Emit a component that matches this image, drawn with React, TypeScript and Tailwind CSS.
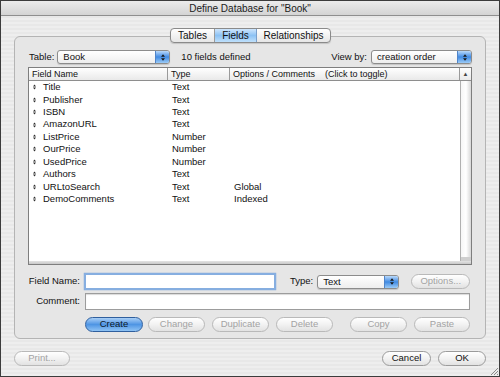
import React from "react";

const font = "font-['Liberation_Sans',Arial,sans-serif]";

const fields = [
  { name: "Title", type: "Text", opt: "" },
  { name: "Publisher", type: "Text", opt: "" },
  { name: "ISBN", type: "Text", opt: "" },
  { name: "AmazonURL", type: "Text", opt: "" },
  { name: "ListPrice", type: "Number", opt: "" },
  { name: "OurPrice", type: "Number", opt: "" },
  { name: "UsedPrice", type: "Number", opt: "" },
  { name: "Authors", type: "Text", opt: "" },
  { name: "URLtoSearch", type: "Text", opt: "Global" },
  { name: "DemoComments", type: "Text", opt: "Indexed" },
];

// tiny up/down arrows used in popups and the row handles
const UpDown = ({ color = "#1a1a1a", w = 5, h = 8 }: { color?: string; w?: number; h?: number }) => (
  <svg width={w} height={h} viewBox="0 0 5 8">
    <path d="M2.5 0 L5 3 L0 3 Z" fill={color} />
    <path d="M0 5 L5 5 L2.5 8 Z" fill={color} />
  </svg>
);

const Popup = ({ label, w }: { label: string; w: string }) => (
  <div
    className={`flex h-[14px] ${w} items-stretch overflow-hidden rounded-[3px] border border-[#8c8c8c] bg-gradient-to-b from-white to-[#eeeeee] shadow-[0_1px_1px_rgba(0,0,0,0.15)]`}
  >
    <span className="flex-1 pl-[5px] text-[9.5px] leading-[12px] text-[#111]">{label}</span>
    <span className="flex w-[14px] items-center justify-center border-l border-[#4f84c9] bg-gradient-to-b from-[#b9d9fa] via-[#3f8ae2] to-[#9ccbf6]">
      <UpDown w={4} h={7} />
    </span>
  </div>
);

const Btn = ({
  label,
  w,
  disabled,
  primary,
}: {
  label: string;
  w: string;
  disabled?: boolean;
  primary?: boolean;
}) => (
  <div
    className={`flex h-[15px] ${w} items-center justify-center rounded-full border text-[9.5px] ${
      primary
        ? "border-[#2f5f9e] bg-gradient-to-b from-[#a9cff6] via-[#4e95e4] to-[#8fc3f4] text-[#0d1a2a]"
        : "border-[#9b9b9b] bg-gradient-to-b from-white via-[#f2f2f2] to-[#e2e2e2]"
    } ${disabled ? "text-[#a3a3a3] border-[#b9b9b9]" : primary ? "" : "text-[#111]"}`}
  >
    {label}
  </div>
);

export default function App() {
  return (
    <div
      className={`${font} flex h-[377px] w-[500px] flex-col overflow-hidden border border-[#3c3c3c] bg-[repeating-linear-gradient(0deg,#eeeeee_0px,#eeeeee_2px,#e8e8e8_2px,#e8e8e8_4px)] text-[#111]`}
    >
      {/* title bar */}
      <div className="flex h-[15px] shrink-0 items-center justify-center border-b border-[#8f8f8f] bg-gradient-to-b from-[#ececec] to-[#d4d4d4] text-[10px] text-[#1b1b1b]">
        Define Database for "Book"
      </div>

      {/* tabs */}
      <div className="relative z-10 mt-[12px] flex justify-center">
        <div className="ml-[1px] flex h-[15px] overflow-hidden rounded-[4px] border border-[#8a8a8a] bg-gradient-to-b from-white to-[#e6e6e6] text-[10px] shadow-[0_1px_1px_rgba(0,0,0,0.15)]">
          <div className="flex w-[44px] items-center justify-center border-r border-[#9a9a9a]">Tables</div>
          <div className="flex w-[42px] items-center justify-center border-r border-[#7a9fcb] bg-gradient-to-b from-[#cfe6fc] via-[#8cc2f4] to-[#bfe0fb]">
            Fields
          </div>
          <div className="flex w-[73px] items-center justify-center">Relationships</div>
        </div>
      </div>

      {/* group box */}
      <div className="mx-[13px] -mt-[7px] flex h-[303px] flex-col rounded-[6px] border border-[#b4b4b4] bg-[#e6e6e6] px-[13px] pt-[13px]">
        <div className="flex h-[14px] items-center text-[9.5px]">
          <span className="ml-[1px] mr-[3px]">Table:</span>
          <Popup label="Book" w="w-[113px]" />
          <span className="ml-[11px]">10 fields defined</span>
          <span className="ml-auto mr-[4px]">View by:</span>
          <Popup label="creation order" w="w-[101px]" />
        </div>

        {/* field list */}
        <div className="mt-[3px] flex h-[198px] flex-col border border-[#7e7e7e] bg-white">
          <div className="flex h-[13px] shrink-0 border-b border-[#8e8e8e] bg-gradient-to-b from-white to-[#e9e9e9] text-[9px]">
            <div className="w-[139px] border-r border-[#9a9a9a] pl-[3px] leading-[12px]">Field Name</div>
            <div className="w-[62px] border-r border-[#9a9a9a] pl-[3px] leading-[12px]">Type</div>
            <div className="flex-1 border-r border-[#9a9a9a] pl-[3px] leading-[12px] whitespace-pre">
              {"Options / Comments    (Click to toggle)"}
            </div>
            <div className="flex w-[11px] items-center justify-center text-[6px] text-[#444]">▲</div>
          </div>
          <div className="flex flex-1">
            <div className="flex-1">
              {fields.map((f) => (
                <div key={f.name} className="flex h-[12.45px] items-center text-[9.5px]">
                  <div className="flex w-[139px] items-center">
                    <span className="ml-[4px] mr-[7px] flex">
                      <UpDown w={3} h={6} color="#2a2a2a" />
                    </span>
                    {f.name}
                  </div>
                  <div className="w-[62px] pl-[4px]">{f.type}</div>
                  <div className="pl-[4px]">{f.opt}</div>
                </div>
              ))}
            </div>
            <div className="flex w-[11px] flex-col border-l border-[#b0b0b0] bg-gradient-to-r from-[#f6f6f6] via-white to-[#d8d8d8]">
              <div className="flex-1" />
              <div className="h-[4px] bg-[#cfcfcf]" />
            </div>
          </div>
          <div className="h-[3px] bg-gradient-to-b from-[#e4e4e4] to-[#c8c8c8]" />
        </div>

        {/* field name row */}
        <div className="mt-[8px] flex h-[17px] items-center text-[9.5px]">
          <span className="w-[52px] text-right">Field Name:</span>
          <div className="ml-[4px] h-[17px] w-[192px] border-2 border-[#86aee0] bg-white shadow-[0_0_1px_#5b8fd6]" />
          <span className="ml-[14px]">Type:</span>
          <span className="ml-[4px]">
            <Popup label="Text" w="w-[82px]" />
          </span>
          <span className="ml-[12px]">
            <Btn label="Options..." w="w-[59px]" disabled />
          </span>
        </div>

        {/* comment row */}
        <div className="mt-[3px] flex h-[17px] items-center text-[9.5px]">
          <span className="w-[52px] text-right">Comment:</span>
          <div className="ml-[5px] h-[17px] flex-1 border border-[#9c9c9c] bg-white shadow-[inset_0_1px_1px_rgba(0,0,0,0.15)]" />
          <div className="w-[2px]" />
        </div>

        {/* action buttons */}
        <div className="mt-[7px] flex h-[15px] items-center pl-[57px]">
          <Btn label="Create" w="w-[58px]" primary />
          <span className="ml-[5px]">
            <Btn label="Change" w="w-[57px]" disabled />
          </span>
          <span className="ml-[7px]">
            <Btn label="Duplicate" w="w-[57px]" disabled />
          </span>
          <span className="ml-[7px]">
            <Btn label="Delete" w="w-[57px]" disabled />
          </span>
          <span className="ml-[17px]">
            <Btn label="Copy" w="w-[57px]" disabled />
          </span>
          <span className="ml-[7px]">
            <Btn label="Paste" w="w-[56px]" disabled />
          </span>
        </div>
      </div>

      {/* bottom buttons */}
      <div className="mt-[12px] flex items-center px-[13px]">
        <Btn label="Print..." w="w-[56px]" disabled />
        <span className="ml-auto">
          <Btn label="Cancel" w="w-[49px]" />
        </span>
        <span className="ml-[7px]">
          <Btn label="OK" w="w-[48px]" />
        </span>
      </div>

      {/* resize grip */}
      <div className="mt-auto flex justify-end">
        <svg width="10" height="10" viewBox="0 0 10 10">
          <path d="M9 2 L2 9 M9 5 L5 9 M9 8 L8 9" stroke="#8a8a8a" strokeWidth="1" />
        </svg>
      </div>
    </div>
  );
}
